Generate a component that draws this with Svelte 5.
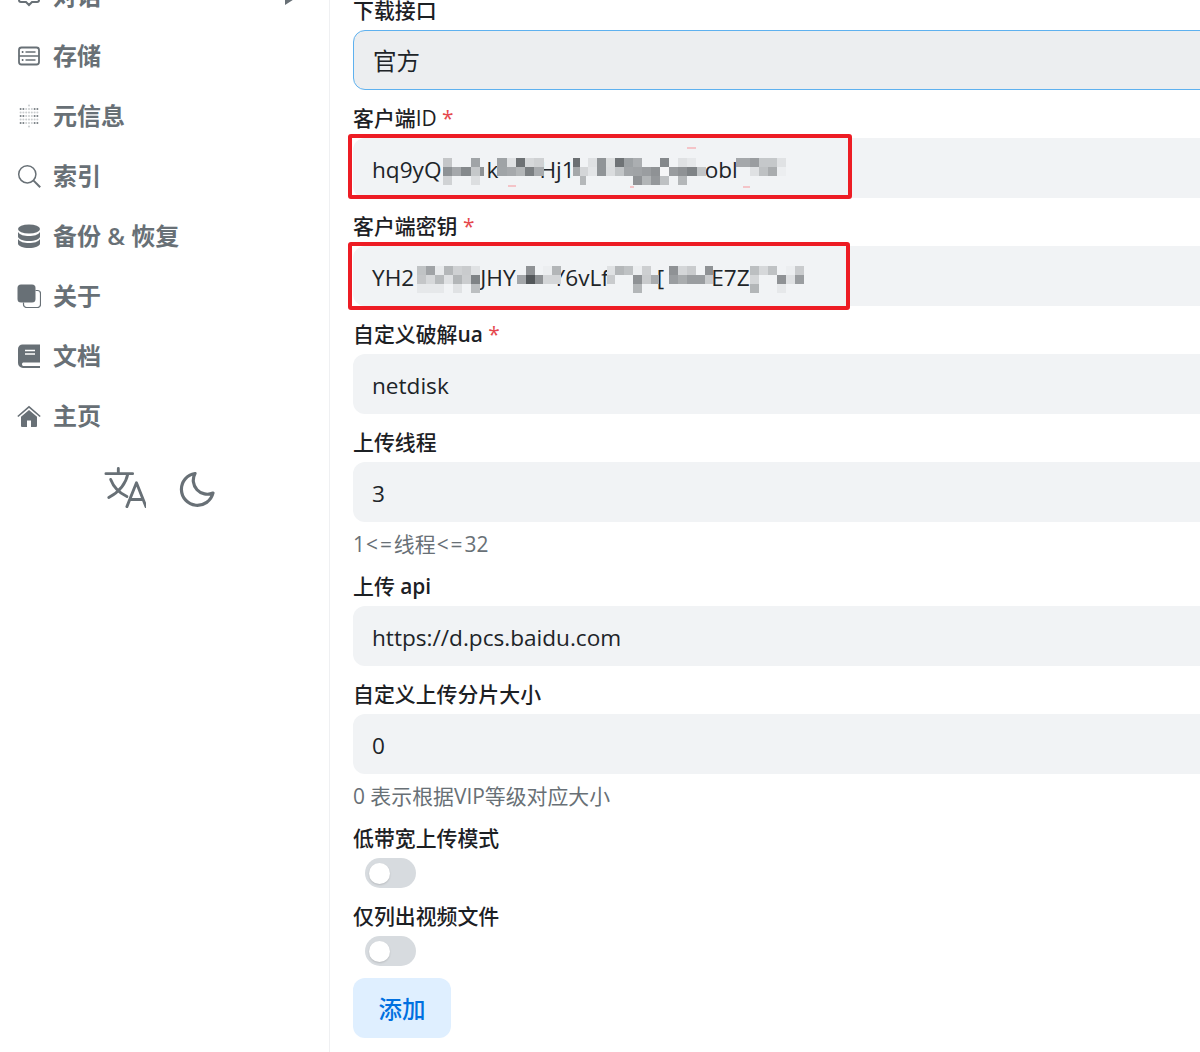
<script>
	const navItems = [
		{ label: '对话', icon: 'chat', arrow: true },
		{ label: '存储', icon: 'storage' },
		{ label: '元信息', icon: 'meta' },
		{ label: '索引', icon: 'search' },
		{ label: '备份 & 恢复', icon: 'db' },
		{ label: '关于', icon: 'about' },
		{ label: '文档', icon: 'book' },
		{ label: '主页', icon: 'home' }
	];

	const metaDots = [];
	for (let r = 0; r < 7; r++) {
		for (let c = 0; c < 7; c++) {
			if ((r === 0 || r === 6) && c !== 3) continue;
			const edge = c < 2 || c > 4;
			metaDots.push({ x: 3.6 + c * 2.8, y: 1.5 + r * 3.5, o: edge && r % 2 === 1 ? 0.9 : 0.35 });
		}
	}

	// mosaic that hides part of the secrets: [x from the input's left, row, width, colour]
	const row = (r, ...runs) => runs.map(([x, w, c]) => [x - 353, r, w, c]);
	const idCells = [
		...row(0, [443, 9, '#c4c6c8'], [471, 9, '#a0a4a7'], [497, 10, '#9fa3a6'], [507, 9, '#dfe1e3'], [516, 9, '#6d7174'], [525, 9, '#d6d8da'], [534, 10, '#cfd1d3'], [573, 7, '#6b6f72'], [588, 9, '#dfe1e3'], [597, 9, '#909497'], [606, 9, '#dcdedf'], [615, 9, '#6f7376'], [624, 9, '#9da1a4'], [633, 9, '#abaeb1'], [660, 9, '#85898c'], [678, 9, '#dfe1e3'], [687, 9, '#e6e8ea'], [736, 14, '#a5a8ab'], [750, 9, '#9a9da0'], [759, 9, '#c5c8ca'], [768, 9, '#c5c8ca'], [777, 9, '#e0e2e4']),
		...row(1, [443, 9, '#8e9295'], [452, 9, '#a5a8ab'], [461, 10, '#85898c'], [471, 9, '#c5c8ca'], [480, 4, '#8e9295'], [497, 10, '#a0a4a7'], [507, 9, '#a6a9ac'], [516, 9, '#b3b6b8'], [525, 9, '#7b7f82'], [534, 10, '#a8abae'], [573, 7, '#a5a8aa'], [580, 8, '#d4d6d8'], [588, 9, '#e3e5e7'], [597, 9, '#909497'], [606, 9, '#dadcde'], [615, 9, '#c2c5c7'], [624, 9, '#a2a5a8'], [633, 9, '#a0a3a6'], [642, 9, '#9a9da0'], [651, 9, '#8f9295'], [660, 9, '#f5f6f7'], [669, 9, '#999c9f'], [678, 9, '#8f9295'], [687, 10, '#7f8386'], [697, 9, '#c2c5c7'], [750, 9, '#dfe1e3'], [759, 9, '#bec1c3'], [768, 9, '#a9acae'], [777, 9, '#eceef0']),
		...row(2, [443, 9, '#d0d2d4'], [471, 9, '#dcdee0'], [580, 6, '#b5b8ba'], [633, 9, '#8f9295'], [642, 9, '#b2b5b7'], [651, 9, '#95989b'], [660, 9, '#bec1c3'], [678, 9, '#b4b7b9'])
	];
	const keyCells = [
		...row(0, [417, 9, '#c0c3c5'], [426, 9, '#a0a3a6'], [435, 9, '#e8eaec'], [444, 9, '#b4b7b9'], [453, 9, '#cfd1d3'], [462, 9, '#c9cbcd'], [471, 9, '#e0e2e4'], [526, 9, '#8f9295'], [543, 9, '#eceef0'], [552, 9, '#b3b6b8'], [607, 8, '#dfe1e3'], [615, 9, '#b4b7b9'], [624, 9, '#bfc2c4'], [633, 9, '#eceef0'], [642, 9, '#cdcfd1'], [669, 9, '#8f9295'], [678, 9, '#d4d6d8'], [687, 9, '#c9cbcd'], [705, 8, '#8f9295'], [750, 9, '#bcbfc1'], [759, 9, '#d6d8da'], [768, 9, '#bfc2c4'], [786, 9, '#eceef0'], [795, 9, '#c9cbcd']),
		...row(1, [417, 9, '#c4c6c8'], [426, 9, '#d6d8da'], [435, 9, '#b8bbbd'], [444, 9, '#dfe1e3'], [453, 9, '#b3b6b8'], [462, 9, '#cbcdcf'], [471, 9, '#7f8386'], [517, 9, '#a3a6a9'], [526, 9, '#53575a'], [535, 8, '#8f9295'], [543, 9, '#d4d6d8'], [552, 9, '#d4d6d8'], [607, 8, '#c9cbcd'], [633, 9, '#8f9295'], [642, 9, '#c9cbcd'], [651, 8, '#a9acae'], [669, 9, '#9a9da0'], [678, 9, '#a9acae'], [687, 9, '#9a9da0'], [696, 9, '#9a9da0'], [705, 8, '#c9cbcd'], [750, 9, '#d4d6d8'], [777, 9, '#8f9295'], [786, 9, '#dfe1e3'], [795, 9, '#9a9da0']),
		...row(2, [417, 9, '#e6e8ea'], [426, 9, '#e6e8ea'], [435, 9, '#e6e8ea'], [453, 9, '#e0e2e4'], [471, 9, '#bcbfc1'], [633, 9, '#b3b6b8'], [750, 9, '#b3b6b8'], [777, 9, '#e6e8ea'])
	];
	const idSpecks = [[155, 47, 8], [277, 48, 4], [390, 48, 7], [334, 9, 9]];
</script>

{#snippet mosaic(cells, specks = [])}
	<svg class="mosaic" viewBox="0 0 500 60" aria-hidden="true">
		{#each cells as [x, r, w, fill]}
			<rect {x} y={20 + r * 9} width={w} height="9" {fill} />
		{/each}
		{#each specks as [x, y, w]}
			<rect {x} {y} width={w} height="2" fill="#f4c4c8" />
		{/each}
	</svg>
{/snippet}

{#snippet navIcon(name)}
	<svg class="nav-icon" viewBox="0 0 24 24" aria-hidden="true">
		{#if name === 'chat'}
			<path d="M2 4a2 2 0 0 1 2-2h16a2 2 0 0 1 2 2v12a2 2 0 0 1-2 2h-5l-3 3-3-3H4a2 2 0 0 1-2-2z" fill="none" stroke="currentColor" stroke-width="2" />
		{:else if name === 'storage'}
			<rect x="2" y="3.500" width="20" height="17" rx="2.500" fill="none" stroke="currentColor" stroke-width="1.800" />
			<path d="M2 12h20M8.500 8h10M8.500 16h10" stroke="currentColor" stroke-width="1.700" />
			<path d="M4.800 8h1.600M4.800 16h1.600" stroke="currentColor" stroke-width="1.900" />
		{:else if name === 'meta'}
			{#each metaDots as d}
				<circle cx={d.x} cy={d.y} r="1" fill="currentColor" opacity={d.o} />
			{/each}
		{:else if name === 'search'}
			<circle cx="10.300" cy="10.300" r="8.600" fill="none" stroke="currentColor" stroke-width="1.500" />
			<path d="M16.600 16.600l6.600 6.600" stroke="currentColor" stroke-width="2" />
		{:else if name === 'db'}
			<ellipse cx="12" cy="5" rx="11" ry="4.500" fill="currentColor" />
			<path d="M1 8c2 3 6 4 11 4s9-1 11-4v4.500c0 2.500-5 4.500-11 4.500S1 15 1 12.500z" fill="currentColor" />
			<path d="M1 15c2 3 6 4 11 4s9-1 11-4v4.500c0 2.500-5 4.500-11 4.500S1 22 1 19.500z" fill="currentColor" />
		{:else if name === 'about'}
			<rect x="0.500" y="0.500" width="18" height="18" rx="3.500" fill="currentColor" />
			<path d="M18.500 6.500h2a3 3 0 0 1 3 3V20.500a3 3 0 0 1-3 3H9.500a3 3 0 0 1-3-3v-2" fill="none" stroke="currentColor" stroke-width="1.200" />
		{:else if name === 'book'}
			<path d="M5.500 0.500H23v18H6a2 2 0 0 0 0 3.500h17v2H6A5 5 0 0 1 1 19V5a4.500 4.500 0 0 1 4.500-4.500z" fill="currentColor" />
			<path d="M8 6.500h10M8 10h10" stroke="#fff" stroke-width="1.600" />
		{:else if name === 'home'}
			<path d="M12 6l-8 6.800V22a1 1 0 0 0 1 1h5v-6.500h4V23h5a1 1 0 0 0 1-1v-9.200z" fill="currentColor" />
			<path d="M0.800 12.500L12 2.800l11.200 9.700" fill="none" stroke="currentColor" stroke-width="1.600" />
		{/if}
	</svg>
{/snippet}

<div class="page">
	<aside class="sidebar">
		<nav class="nav">
			{#each navItems as item}
				<div class="nav-item">
					{@render navIcon(item.icon)}
					<span class="nav-label">{item.label}</span>
					{#if item.arrow}
						<svg class="arrow" viewBox="0 0 14 18" aria-hidden="true"><path d="M0 0l14 9-14 9z" fill="currentColor" /></svg>
					{/if}
				</div>
			{/each}
		</nav>
		<div class="tools">
			<svg class="tool" viewBox="0 0 44 44" aria-hidden="true">
				<path d="M2 7h28M15 1.500V7M25 7c-2 10-9 19-20 25M7 13c3 8 9 14 17 18" fill="none" stroke="currentColor" stroke-width="3" stroke-linecap="round" />
				<path d="M24 41.500l10-25 10 25M28 34h12" fill="none" stroke="currentColor" stroke-width="3" stroke-linecap="round" stroke-linejoin="round" />
			</svg>
			<svg class="tool moon" viewBox="0 0 36 36" aria-hidden="true">
				<path d="M16 2.500A16 16 0 1 0 34 22 14 14 0 0 1 16 2.500z" fill="none" stroke="currentColor" stroke-width="3.200" stroke-linejoin="round" stroke-linecap="round" />
			</svg>
		</div>
	</aside>

	<main class="form">
		<div class="field">
			<div class="label">下载接口</div>
			<div class="input select">官方</div>
		</div>
		<div class="field">
			<div class="label">客户端ID <span class="req">*</span></div>
			<div class="input">
				hq9yQ<span class="gap g45"></span>k<span class="gap g41"></span>Hj1<span class="gap g130"></span>obl
				{@render mosaic(idCells, idSpecks)}
				<span class="red-box first"></span>
			</div>
		</div>
		<div class="field">
			<div class="label">客户端密钥 <span class="req">*</span></div>
			<div class="input">
				YH2<span class="gap g66"></span>JHY<span class="gap g37"></span>Y6vLf<span class="gap g48"></span>[<span class="gap g47"></span>E7Z
				{@render mosaic(keyCells)}
				<span class="red-box second"></span>
			</div>
		</div>
		<div class="field">
			<div class="label">自定义破解<span class="latin">ua</span> <span class="req">*</span></div>
			<div class="input">netdisk</div>
		</div>
		<div class="field">
			<div class="label">上传线程</div>
			<div class="input">3</div>
			<div class="help">1<span class="wide">&lt;=</span>线程<span class="wide">&lt;=</span>32</div>
		</div>
		<div class="field">
			<div class="label">上传 <span class="latin">api</span></div>
			<div class="input">https://d.pcs.baidu.com</div>
		</div>
		<div class="field">
			<div class="label">自定义上传分片大小</div>
			<div class="input">0</div>
			<div class="help">0 表示根据VIP等级对应大小</div>
		</div>
		<div class="field">
			<div class="label">低带宽上传模式</div>
			<div class="switch"><span class="thumb"></span></div>
		</div>
		<div class="field">
			<div class="label">仅列出视频文件</div>
			<div class="switch"><span class="thumb"></span></div>
		</div>
		<button class="add">添加</button>
	</main>
</div>

<style>
	:global(body) {
		margin: 0;
		background: #fff;
		overflow: hidden;
	}
	.page {
		display: flex;
		height: 1052px;
		overflow: hidden;
		font-family: "Open Sans", "Noto Sans CJK SC", sans-serif;
		color: #1f2328;
	}
	.sidebar {
		flex: 0 0 329px;
		border-right: 1px solid #eff0f2;
		color: #687076;
	}
	.nav {
		margin-top: -34px;
	}
	.nav-item {
		height: 60px;
		display: flex;
		align-items: center;
		padding: 0 30px 0 17px;
		box-sizing: border-box;
	}
	.nav-icon {
		width: 24px;
		height: 24px;
		margin-right: 12px;
		flex: none;
	}
	.nav-label {
		font-size: 24px;
		font-weight: 600;
		line-height: 1;
	}
	.arrow {
		width: 14px;
		height: 18px;
		margin-left: auto;
	}
	.tools {
		display: flex;
		justify-content: center;
		align-items: center;
		gap: 33px;
		margin-top: 23px;
		padding-right: 11px;
	}
	.tool {
		width: 42px;
		height: 42px;
		margin-top: -2px;
	}
	.tool.moon {
		width: 36px;
		height: 36px;
		margin-top: 0;
	}
	.form {
		flex: 1;
		min-width: 0;
		margin-top: -3px;
		padding-left: 23px;
		display: flex;
		flex-direction: column;
		align-items: flex-start;
		gap: 15px;
	}
	.field {
		width: 1000px;
	}
	.label {
		font-size: 20.900px;
		font-weight: 500;
		line-height: 26px;
		height: 26px;
		margin-bottom: 7px;
		color: #1c2024;
	}
	.latin {
		font-weight: 600;
	}
	.req {
		color: #e5484d;
		font-weight: 400;
	}
	.input {
		position: relative;
		height: 60px;
		display: flex;
		align-items: center;
		padding: 2px 0 0 19px;
		font-size: 22.600px;
		background: #f1f3f5;
		border-radius: 12px;
		box-sizing: border-box;
		white-space: pre;
		color: #202428;
	}
	.select {
		padding: 0 0 0 19px;
		font-size: 23.500px;
		background: #eceef0;
		border: 1px solid #5eb1ef;
	}
	.gap {
		flex: none;
	}
	.g37 { width: 37px; }
	.g41 { width: 41px; }
	.g45 { width: 45px; }
	.g47 { width: 47px; }
	.g48 { width: 48px; }
	.g66 { width: 66px; }
	.g130 { width: 130px; }
	.mosaic {
		position: absolute;
		left: 0;
		top: 0;
		width: 500px;
		height: 60px;
	}
	.red-box {
		position: absolute;
		border: 4px solid #ed1c24;
		border-radius: 3px;
		box-sizing: border-box;
		left: -5px;
		top: -4px;
	}
	.red-box.first {
		width: 504px;
		height: 65px;
	}
	.red-box.second {
		width: 502px;
		height: 68px;
	}
	.help {
		font-size: 20.900px;
		line-height: 26px;
		margin-top: 9px;
		color: #687076;
	}
	.wide {
		letter-spacing: 2px;
		margin-left: 1px;
	}
	.switch {
		width: 51px;
		height: 30px;
		margin-left: 12px;
		background: #d7dbdf;
		border-radius: 15px;
		display: flex;
		align-items: center;
		padding-left: 4px;
		box-sizing: border-box;
	}
	.field:has(.help) {
		padding-bottom: 1px;
	}
	.thumb {
		width: 21px;
		height: 21px;
		border-radius: 50%;
		background: #fff;
		box-shadow: 0 1px 2px rgba(0, 0, 0, 0.15);
	}
	.add {
		width: 98px;
		height: 60px;
		margin-top: -3px;
		border: 0;
		border-radius: 12px;
		background: #dfefff;
		color: #0070e0;
		font: 500 23.500px "Open Sans", "Noto Sans CJK SC", sans-serif;
		padding: 0;
	}
</style>
